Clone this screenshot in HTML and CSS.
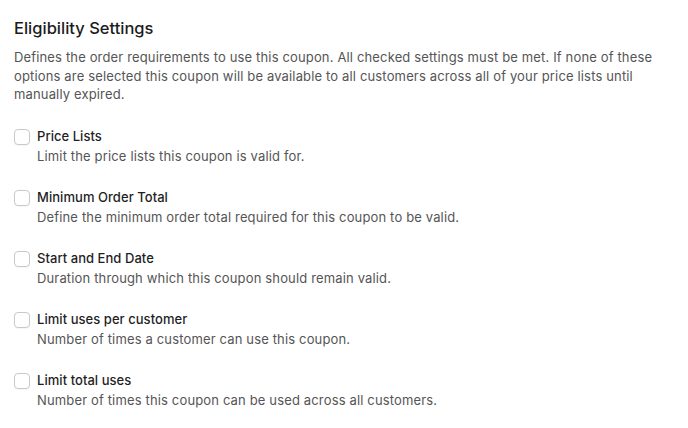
FILE: index.html
```html
<!DOCTYPE html>
<html lang="en">
<head>
<meta charset="utf-8">
<title>Eligibility Settings</title>
<link rel="stylesheet" href="styles.css">
</head>
<body>
<section class="settings">
  <h2 class="heading">Eligibility Settings</h2>
  <p class="intro">Defines the order requirements to use this coupon. All checked settings must be met. If none of these options are selected this coupon will be available to all customers across all of your price lists until manually expired.</p>
  <ul class="options">
    <li class="option">
      <span class="box"></span>
      <div class="text">
        <div class="title">Price Lists</div>
        <div class="desc">Limit the price lists this coupon is valid for.</div>
      </div>
    </li>
    <li class="option">
      <span class="box"></span>
      <div class="text">
        <div class="title">Minimum Order Total</div>
        <div class="desc">Define the minimum order total required for this coupon to be valid.</div>
      </div>
    </li>
    <li class="option">
      <span class="box"></span>
      <div class="text">
        <div class="title">Start and End Date</div>
        <div class="desc">Duration through which this coupon should remain valid.</div>
      </div>
    </li>
    <li class="option">
      <span class="box"></span>
      <div class="text">
        <div class="title">Limit uses per customer</div>
        <div class="desc">Number of times a customer can use this coupon.</div>
      </div>
    </li>
    <li class="option">
      <span class="box"></span>
      <div class="text">
        <div class="title">Limit total uses</div>
        <div class="desc">Number of times this coupon can be used across all customers.</div>
      </div>
    </li>
  </ul>
</section>
</body>
</html>
```
FILE: styles.css
```css
html, body {
  margin: 0;
  padding: 0;
  background: #ffffff;
}
body {
  font-family: Inter, "Liberation Sans", sans-serif;
  color: #1f1f1f;
}
.settings {
  padding: 18px 14px 0 14px;
}
.heading {
  margin: 0;
  font-size: 16.5px;
  line-height: 20px;
  font-weight: 500;
  color: #1c1c1c;
}
.intro {
  margin: 10px 0 0 0;
  font-size: 13px;
  line-height: 18.5px;
  letter-spacing: 0.15px;
  color: #555555;
  max-width: 660px;
}
.options {
  list-style: none;
  margin: 22px 0 0 0;
  padding: 0;
  display: flex;
  flex-direction: column;
  gap: 21px;
}
.option {
  display: flex;
  align-items: flex-start;
  gap: 7px;
}
.box {
  flex: none;
  width: 14px;
  height: 14px;
  margin-top: 3px;
  border: 1px solid #c9c9c9;
  border-radius: 4px;
  background: #fff;
  box-shadow: 0 1px 1px rgba(0,0,0,0.04);
}
.title {
  font-size: 13px;
  line-height: 20px;
  font-weight: 500;
  letter-spacing: 0.05px;
  color: #1f1f1f;
}
.desc {
  font-size: 13px;
  line-height: 20px;
  letter-spacing: 0.15px;
  color: #555555;
}
```
